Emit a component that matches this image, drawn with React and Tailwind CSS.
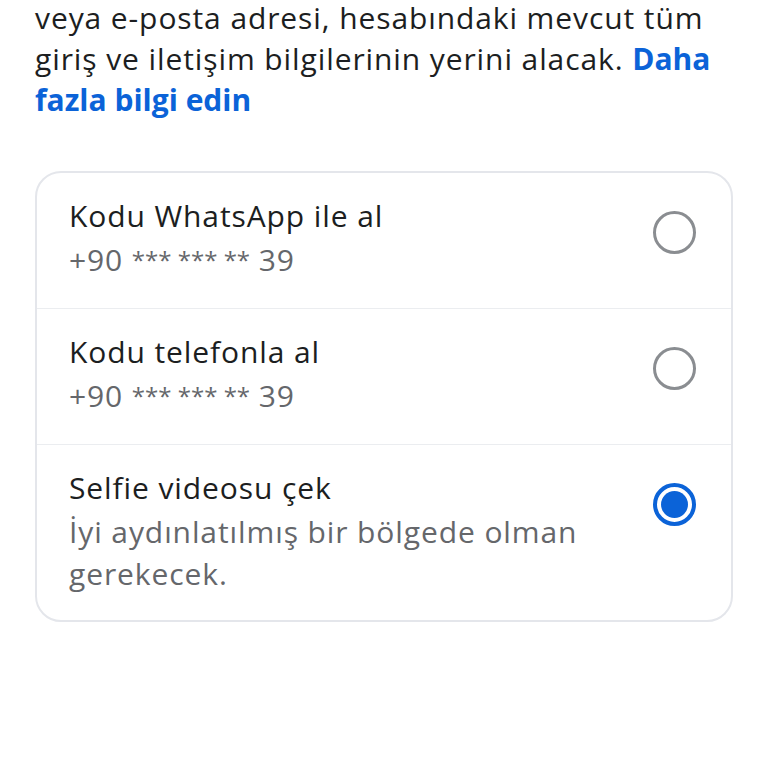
import React from "react";

function Radio({ checked }) {
  if (checked) {
    return (
      <div className="w-[43px] h-[43px] shrink-0 rounded-full border-[4px] border-[#0b63d8] flex items-center justify-center">
        <div className="w-[27px] h-[27px] rounded-full bg-[#0b63d8]" />
      </div>
    );
  }
  return <div className="w-[43px] h-[43px] shrink-0 rounded-full border-[3px] border-[#8a8d91]" />;
}

function Phone() {
  return (
    <>
      +90 <span className="text-[24px] tracking-[0px] relative top-[-2px]">*** *** **</span> 39
    </>
  );
}

function Row({ title, lines, checked, last }) {
  return (
    <div className={"flex items-start justify-between pl-[32px] pr-[35px] pt-[20px] pb-[25px] " + (last ? "" : "border-b border-[#ebedf0]")}>
      <div className="flex flex-col">
        <div className="text-[30px] leading-[46px] tracking-[0.9px] text-[#1c1e21] whitespace-nowrap">{title}</div>
        {lines.map((l, i) => (
          <div key={i} className="text-[30px] leading-[42px] tracking-[0.9px] text-[#65676b] whitespace-nowrap">{l}</div>
        ))}
      </div>
      <div className="mt-[18px]">
        <Radio checked={checked} />
      </div>
    </div>
  );
}

export default function App() {
  return (
    <div className="w-[768px] h-[768px] bg-white overflow-hidden" style={{ fontFamily: "'Open Sans', 'Noto Sans', sans-serif" }}>
      <div className="px-[35px] mt-[-3px] text-[30px] leading-[41px] tracking-[0.9px] text-[#1c1e21] whitespace-nowrap">
        <div>veya e-posta adresi, hesabındaki mevcut tüm</div>
        <div>
          giriş ve iletişim bilgilerinin yerini alacak.{" "}
          <span className="font-bold text-[#0b63d8] tracking-[0px]">Daha</span>
        </div>
        <div className="font-bold text-[#0b63d8] tracking-[0px]">fazla bilgi edin</div>
      </div>
      <div className="mx-[35px] mt-[51px] border-2 border-[#e4e6eb] rounded-[26px] overflow-hidden">
        <Row title="Kodu WhatsApp ile al" lines={[<Phone key="p" />]} />
        <Row title="Kodu telefonla al" lines={[<Phone key="p" />]} />
        <Row title="Selfie videosu çek" lines={["İyi aydınlatılmış bir bölgede olman", "gerekecek."]} checked last />
      </div>
    </div>
  );
}
